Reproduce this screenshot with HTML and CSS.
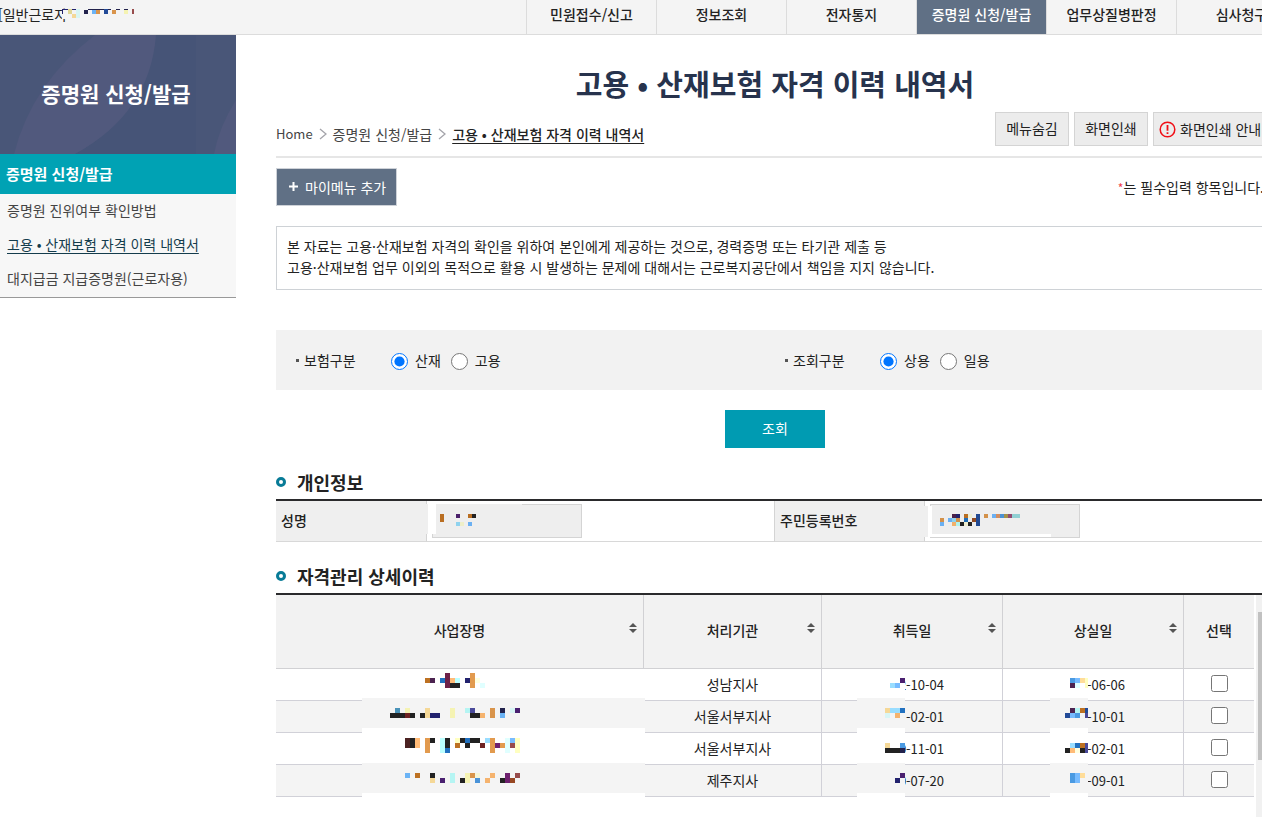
FILE: index.html
```html
<!DOCTYPE html>
<html lang="ko">
<head>
<meta charset="utf-8">
<title>고용 • 산재보험 자격 이력 내역서</title>
<link rel="stylesheet" href="styles.css">
</head>
<body>
<header class="topbar">
  <div class="user">[일반근로자
    <svg class="mask mask-user" width="74" height="10" viewBox="62 9 74 10" shape-rendering="crispEdges" aria-hidden="true">
      <path fill="#f4f4f4" d="M62 9h74v10h-74z"/>
      <path fill="#22226e" d="M62 9h6v1h-6zM62 9h1v5h-1zM72 9h4v1h-4z"/>
      <path fill="#e0d897" d="M68 9h4v5h-4z"/><path fill="#f5d897" d="M72 14h4v4h-4z"/><path fill="#d8f5f3" d="M76 9h4v9h-4z"/>
      <path fill="#22224c" d="M84 10h4v4h-4zM88 9h12v1h-12zM100 9h4v1h-4zM108 9h3v1h-3zM116 9h4v1h-4zM124 9h4v1h-4z"/>
      <path fill="#6bb3f5" d="M92 10h4v4h-4z"/><path fill="#d9944b" d="M96 10h4v4h-4zM112 10h4v4h-4z"/>
      <path fill="#224a97" d="M104 9h4v5h-4z"/><path fill="#f5f3b3" d="M124 10h4v4h-4z"/><path fill="#974c4c" d="M132 9h2v5h-2z"/>
    </svg>
  </div>
  <nav class="gnb" aria-label="주 메뉴">
    <a href="#">민원접수/신고</a>
    <a href="#">정보조회</a>
    <a href="#">전자통지</a>
    <a href="#" class="on">증명원 신청/발급</a>
    <a href="#">업무상질병판정</a>
    <a href="#">심사청구</a>
  </nav>
</header>

<div class="layout">
  <aside class="side">
    <div class="side-hero">
      <svg class="leaf" viewBox="0 0 236 119" preserveAspectRatio="none" aria-hidden="true">
        <path fill="#465477" d="M156 0h40v119H75Q148 78 156 0z"/>
        <path fill="#51597d" d="M95 0Q32 48 14 119h61Q150 78 156 0zM236 65Q219 92 214 119h22z"/>
      </svg>
      <h2>증명원 신청/발급</h2>
    </div>
    <h3 class="side-group">증명원 신청/발급</h3>
    <ul class="side-list">
      <li><a href="#">증명원 진위여부 확인방법</a></li>
      <li><a href="#" class="on">고용 • 산재보험 자격 이력 내역서</a></li>
      <li><a href="#">대지급금 지급증명원(근로자용)</a></li>
    </ul>
  </aside>

  <main class="main">
    <h1>고용 • 산재보험 자격 이력 내역서</h1>
    <div class="pagebar">
      <nav class="crumbs" aria-label="현재 위치">
        <a href="#" class="home">Home</a>
        <svg width="8" height="12" viewBox="0 0 8 12" aria-hidden="true"><path d="M1 1l6 5-6 5" fill="none" stroke="#a4a4aa" stroke-width="1.3"/></svg>
        <a href="#">증명원 신청/발급</a>
        <svg width="8" height="12" viewBox="0 0 8 12" aria-hidden="true"><path d="M1 1l6 5-6 5" fill="none" stroke="#a4a4aa" stroke-width="1.3"/></svg>
        <a href="#" class="here">고용 • 산재보험 자격 이력 내역서</a>
      </nav>
      <div class="tools">
        <button type="button">메뉴숨김</button>
        <button type="button">화면인쇄</button>
        <button type="button" class="with-icon">
          <svg width="17" height="17" viewBox="0 0 17 17" aria-hidden="true"><circle cx="8.5" cy="8.5" r="7.3" fill="none" stroke="#f00e16" stroke-width="1.5"/><path d="M8.5 4v5.800M8.500 11.200v1.800" stroke="#f00e16" stroke-width="1.800"/></svg>
          화면인쇄 안내</button>
      </div>
    </div>

    <div class="actions">
      <button type="button" class="add"><svg width="11" height="11" viewBox="0 0 11 11" aria-hidden="true"><path d="M5.500 1v9M1 5.500h9" stroke="#fff" stroke-width="2"/></svg>마이메뉴 추가</button>
      <p class="required"><span>*</span>는 필수입력 항목입니다.</p>
    </div>

    <p class="notice">본 자료는 고용·산재보험 자격의 확인을 위하여 본인에게 제공하는 것으로, 경력증명 또는 타기관 제출 등<br>고용·산재보험 업무 이외의 목적으로 활용 시 발생하는 문제에 대해서는 근로복지공단에서 책임을 지지 않습니다.</p>

    <form class="search">
      <div class="filters">
        <div class="filter" role="radiogroup" aria-labelledby="ins">
          <span class="filter-name" id="ins">보험구분</span>
          <label><input type="radio" name="ins" checked>산재</label>
          <label><input type="radio" name="ins">고용</label>
        </div>
        <div class="filter" role="radiogroup" aria-labelledby="kind">
          <span class="filter-name" id="kind">조회구분</span>
          <label><input type="radio" name="kind" checked>상용</label>
          <label><input type="radio" name="kind">일용</label>
        </div>
      </div>
      <button type="button" class="submit">조회</button>
    </form>

    <h2 class="section">개인정보</h2>
    <table class="info">
      <colgroup><col class="c-label"><col class="c-name"><col class="c-label"><col></colgroup>
      <tr>
        <th scope="row"><label for="nm">성명</label></th>
        <td><div class="field"><input id="nm" type="text" readonly>
          <svg class="mask mask-name" width="98" height="30" viewBox="424 504 98 30" shape-rendering="crispEdges" aria-hidden="true">
            <path fill="#efefef" d="M424 504h4v30h-4z"/><path fill="#fff" d="M428 504h8v30h-8z"/><path fill="#eee" d="M436 504h86v30h-86z"/>
            <path fill="#b96e22" d="M440 514h4v8h-4zM468 514h4v4h-4z"/><path fill="#4a206a" d="M456 514h4v4h-4z"/><path fill="#222" d="M472 514h4v4h-4z"/>
            <path fill="#8fd2ee" d="M456 522h4v4h-4z"/><path fill="#eeeec8" d="M460 522h4v4h-4z"/><path fill="#6bb0f2" d="M468 522h4v4h-4z"/>
          </svg></div></td>
        <th scope="row"><label for="rrn">주민등록번호</label></th>
        <td><div class="field"><input id="rrn" type="text" readonly>
          <svg class="mask mask-rrn" width="129" height="31" viewBox="922 506 129 31" shape-rendering="crispEdges" aria-hidden="true">
            <path fill="#efefef" d="M922 506h6v31h-6z"/><path fill="#fff" d="M928 506h4v31h-4zM932 534h119v3h-119z"/><path fill="#eee" d="M932 506h119v28h-119z"/>
            <path fill="#4a2048" d="M952 514h4v4h-4z"/><path fill="#22226a" d="M956 514h4v4h-4z"/><path fill="#b96e22" d="M964 514h4v4h-4z"/>
            <path fill="#eeeed0" d="M968 514h4v4h-4zM964 522h4v4h-4z"/><path fill="#224a92" d="M976 514h4v12h-4z"/>
            <path fill="#d3914a" d="M984 514h4v4h-4zM940 518h4v4h-4zM956 518h4v4h-4z"/>
            <path fill="#6bb0f2" d="M992 514h4v4h-4zM948 518h4v4h-4zM940 522h4v4h-4z"/><path fill="#d38e60" d="M996 514h4v4h-4z"/>
            <path fill="#4a91d3" d="M1000 514h4v4h-4z"/><path fill="#a3914a" d="M1004 514h4v4h-4z"/><path fill="#914a70" d="M1008 514h4v4h-4z"/>
            <path fill="#91d0d3" d="M1012 514h8v4h-8z"/><path fill="#8fd2ee" d="M952 518h4v4h-4z"/><path fill="#216eb9" d="M964 518h4v4h-4z"/>
            <path fill="#914a22" d="M972 518h4v4h-4z"/><path fill="#f2b06b" d="M952 522h4v4h-4z"/><path fill="#b0f2ee" d="M956 522h4v4h-4z"/><path fill="#222" d="M960 522h4v4h-4zM968 522h4v4h-4z"/>
          </svg></div></td>
      </tr>
    </table>

    <h2 class="section">자격관리 상세이력</h2>
    <div class="grid">
      <div class="grid-body">
      <table class="history">
        <colgroup><col><col class="c-office"><col class="c-date"><col class="c-date"><col class="c-check"></colgroup>
        <thead>
          <tr>
            <th scope="col">사업장명<svg class="sort" viewBox="0 0 8 10" aria-hidden="true"><path d="M4 0l4 4H0zM4 10l4-4H0z"/></svg></th>
            <th scope="col">처리기관<svg class="sort" viewBox="0 0 8 10" aria-hidden="true"><path d="M4 0l4 4H0zM4 10l4-4H0z"/></svg></th>
            <th scope="col">취득일<svg class="sort" viewBox="0 0 8 10" aria-hidden="true"><path d="M4 0l4 4H0zM4 10l4-4H0z"/></svg></th>
            <th scope="col">상실일<svg class="sort" viewBox="0 0 8 10" aria-hidden="true"><path d="M4 0l4 4H0zM4 10l4-4H0z"/></svg></th>
            <th scope="col">선택</th>
          </tr>
        </thead>
        <tbody>
          <tr><td></td><td>성남지사</td><td class="date">2-10-04</td><td class="date">-06-06</td><td><input type="checkbox" aria-label="성남지사 선택"></td></tr>
          <tr><td></td><td>서울서부지사</td><td class="date">-02-01</td><td class="date">-10-01</td><td><input type="checkbox" aria-label="서울서부지사 선택"></td></tr>
          <tr><td></td><td>서울서부지사</td><td class="date">0-11-01</td><td class="date">-02-01</td><td><input type="checkbox" aria-label="서울서부지사 선택"></td></tr>
          <tr><td></td><td>제주지사</td><td class="date">0-07-20</td><td class="date">-09-01</td><td><input type="checkbox" aria-label="제주지사 선택"></td></tr>
        </tbody>
      </table>

      <svg class="mask mask-place" width="285" height="125" viewBox="0 0 57 25" shape-rendering="crispEdges" aria-hidden="true">
        <path fill="#f4f4f4" d="M.4 5H57v6H.4zM.4 18H57v6H.4z"/><path fill="#fff" d="M.4 11H57v7H.4zM.4 24H57v1H.4z"/>
        <path fill="#bd7122" d="M13 1h1v1h-1zM19 14h1v1h-1zM11 20h1v1h-1z"/>
        <path fill="#4c2350" d="M14 1h1v1h-1z"/>
        <path fill="#2171c0" d="M16 1h1v1h-1zM17 15h1v1h-1zM21 13h1v1h-1z"/>
        <path fill="#6e2148" d="M17 0h1v3h-1z"/>
        <path fill="#ffbb77" d="M18 1h1v1h-1zM11 13h1v2h-1z"/>
        <path fill="#bbffff" d="M19 1h1v1h-1zM16 13h1v3h-1z"/>
        <path fill="#222" d="M18 2h2v1h-2zM6 8h3v1H6zM10 8h1v1h-1zM12 8h1v1h-1zM22 8h2v1h-2zM10 13h1v2h-1zM14 13h1v1h-1zM17 13h1v2h-1zM20 13h1v1h-1zM21 14h1v1h-1zM22 13h2v1h-2zM14 20h1v1h-1zM20 21h1v1h-1zM28 21h1v1h-1z"/>
        <path fill="#22226e" d="M21 1h1v1h-1zM14 8h2v1h-2z"/>
        <path fill="#e29a4e" d="M22 0h1v3h-1zM13 13h1v3h-1zM26 13h1v3h-1zM28 14h1v1h-1z"/>
        <path fill="#ffffe0" d="M23 1h1v1h-1z"/>
        <path fill="#e0ffff" d="M24 2h1v1h-1zM29 13h1v3h-1z"/>
        <path fill="#4a93b9" d="M7 7h1v1H7z"/>
        <path fill="#f5f3b3" d="M9 7h1v1H9zM18 7h1v2h-1zM21 20h1v2h-1z"/>
        <path fill="#6e2222" d="M9 8h1v1H9zM24 14h1v1h-1z"/>
        <path fill="#f5d897" d="M13 7h1v2h-1zM14 21h1v1h-1z"/>
        <path fill="#b5f5f3" d="M21 7h1v1h-1zM18 20h1v2h-1z"/>
        <path fill="#4a4a9a" d="M22 7h1v1h-1z"/>
        <path fill="#f5b36e" d="M24 8h1v1h-1zM25 21h1v1h-1zM26 20h1v1h-1z"/>
        <path fill="#d9944b" d="M26 7h1v2h-1zM22 20h1v1h-1z"/>
        <path fill="#22224c" d="M28 7h1v1h-1z"/>
        <path fill="#6bb3f5" d="M28 8h1v1h-1zM9 20h1v1H9z"/>
        <path fill="#d8f5f5" d="M30 7h1v1h-1z"/>
        <path fill="#4a2070" d="M31 7h1v1h-1zM16 21h1v1h-1z"/>
        <path fill="#4c2222" d="M9 13h1v2H9z"/>
        <path fill="#ffffc0" d="M19 13h1v1h-1zM31 13h1v3h-1z"/>
        <path fill="#99ddff" d="M25 13h1v1h-1z"/>
        <path fill="#6e216e" d="M27 14h1v1h-1zM29 20h1v2h-1z"/>
        <path fill="#77bbff" d="M30 13h1v1h-1z"/>
        <path fill="#974c4c" d="M30 14h1v1h-1zM31 20h1v1h-1z"/>
        <path fill="#f5f5d8" d="M23 20h1v1h-1z"/>
        <path fill="#4a93d9" d="M23 21h1v1h-1z"/>
        <path fill="#974722" d="M30 21h1v1h-1z"/>
      </svg>

      <svg class="mask mask-from" width="50" height="125" viewBox="0 0 10 25" shape-rendering="crispEdges" aria-hidden="true">
        <path fill="#fff" d="M.4 0H10v5H.4zM.4 11H10v7H.4zM.4 24H10v1H.4z"/><path fill="#f4f4f4" d="M.4 5H10v6H.4zM.4 18H10v6H.4z"/>
        <path fill="#99ddff" d="M7 2h1v1H7zM7 7h2v1H7z"/><path fill="#77bbff" d="M8 2h1v1H8z"/><path fill="#4a2070" d="M9 1h1v1H9zM9 20h1v1H9z"/>
        <path fill="#f5d897" d="M6 7h1v1H6zM6 14h1v1H6z"/><path fill="#2171c0" d="M9 7h1v1H9z"/><path fill="#d8f5f5" d="M6 8h1v1H6z"/><path fill="#f5b36e" d="M8 8h1v1H8z"/>
        <path fill="#4a9ae2" d="M9 14h1v1H9z"/><path fill="#222" d="M6 15h3v1H6z"/><path fill="#22224c" d="M9 15h1v1H9z"/><path fill="#22226e" d="M8 21h1v1H8z"/>
      </svg>

      <svg class="mask mask-to" width="38" height="125" viewBox="0 0 7.6 25" shape-rendering="crispEdges" aria-hidden="true">
        <path fill="#fff" d="M0 0h7.600v5H0zM0 11h7.600v7H0zM0 24h7.600v1H0z"/><path fill="#f4f4f4" d="M0 5h7.600v6H0zM0 18h7.600v6H0z"/>
        <path fill="#4a9ae2" d="M4 1h1v1H4zM5 8h1v1H5zM4 20h1v2H4z"/><path fill="#77bbff" d="M5 1h1v1H5zM4 8h1v1H4zM5 20h1v2H5z"/>
        <path fill="#ffdd99" d="M6 1h1v1H6zM6 20h1v1H6z"/><path fill="#ffffc0" d="M7 1h1v2H7z"/><path fill="#4c2350" d="M4 2h1v1H4zM4 7h1v1H4z"/>
        <path fill="#e0ffff" d="M5 2h1v1H5z"/><path fill="#b5f5f3" d="M5 7h1v1H5z"/><path fill="#bd7122" d="M6 7h1v1H6zM6 14h1v1H6z"/>
        <path fill="#224a97" d="M7 7h1v1H7zM3 8h1v1H3z"/><path fill="#4a4a9a" d="M7 8h1v1H7zM7 14h1v2H7z"/><path fill="#99ddff" d="M4 14h1v1H4z"/>
        <path fill="#2171c0" d="M5 14h1v1H5z"/><path fill="#222" d="M3 15h1v1H3zM6 15h1v1H6z"/><path fill="#ffbb77" d="M4 15h1v1H4z"/><path fill="#ffffe0" d="M5 15h1v1H5z"/>
      </svg>
      </div>
      <div class="scroll" aria-hidden="true">
        <svg class="arrow" viewBox="0 0 17 17"><path fill="#505050" d="M5 11h7l-3.500-4z"/></svg>
        <div class="thumb"></div>
        <svg class="arrow" viewBox="0 0 17 17"><path fill="#505050" d="M5 6h7l-3.500 4z"/></svg>
      </div>
    </div>
  </main>
</div>
</body>
</html>
```

FILE: styles.css
```css
*, *::before { box-sizing: border-box; }
body {
  margin: 0;
  overflow: hidden;
  background: #fff;
  color: #222;
  font: 14px/20px "Noto Sans CJK KR", sans-serif;
}
h1, h2, h3, p, ul { margin: 0; padding: 0; }
ul { list-style: none; }
a { color: inherit; text-decoration: none; }
button { font: inherit; color: inherit; padding: 0 0 2px; cursor: pointer; }
.mask { position: absolute; pointer-events: none; }

.topbar {
  display: flex;
  justify-content: space-between;
  height: 35px;
  background: #f4f4f4;
  border-bottom: 1px solid #dcdcdc;
}
.user { position: relative; margin-left: -2px; padding-top: 4px; }
.mask-user { left: 64px; top: 9px; }
.gnb { display: flex; flex: none; margin-right: -44px; }
.gnb a {
  width: 130px;
  padding-top: 4px;
  border-left: 1px solid #dcdcdc;
  text-align: center;
  font-weight: 500;
}
.gnb .on { background: #607085; color: #fff; }

.layout { display: flex; align-items: flex-start; }
.side { flex: none; width: 236px; border-bottom: 1px solid #999; background: #f7f7f7; }
.side-hero {
  position: relative;
  display: flex;
  align-items: center;
  justify-content: center;
  height: 119px;
  padding: 0 4px 4px 0;
  background: #495678;
}
.leaf { position: absolute; left: 0; top: 0; width: 100%; height: 100%; }
.side-hero h2 { position: relative; color: #fff; font-size: 21px; line-height: 28px; font-weight: 700; }
.side-group {
  padding: 10px 6px;
  background: #00a2b4;
  color: #fff;
  font-size: 15px;
  line-height: 20px;
  font-weight: 700;
}
.side-list { padding-bottom: 1px; }
.side-list li { padding: 6px 7px 8px; color: #444; }
.side-list .on { color: #143c4c; text-decoration: underline; text-underline-offset: 3px; }

.main { flex: 1; min-width: 0; margin: 0 -12px 0 40px; }
h1 {
  padding: 26px 0 2px;
  color: #27334d;
  font-size: 29px;
  line-height: 44px;
  font-weight: 700;
  text-align: center;
}
.pagebar {
  display: flex;
  justify-content: space-between;
  padding: 5px 0 10px;
  border-bottom: 2px solid #e6e6e6;
}
.crumbs { display: flex; align-items: center; gap: 6px; padding-top: 10px; color: #444; }
.crumbs .home { font-size: 13px; }
.crumbs .here { color: #222; font-weight: 500; text-decoration: underline; text-underline-offset: 3px; }
.tools { display: flex; gap: 5px; }
.tools button {
  height: 34px;
  width: 74px;
  border: 1px solid #d4d4d4;
  background: #ececec;
}
.tools .with-icon { display: flex; align-items: center; gap: 4px; width: 121px; padding: 0 0 0 5px; }

.actions { display: flex; justify-content: space-between; align-items: center; padding: 10px 0 20px; }
.add {
  display: flex;
  align-items: center;
  gap: 6px;
  height: 38px;
  padding: 0 10px 1px 11px;
  border: 1px solid #ced2d8;
  background: #607085;
  color: #fff;
}
.required { padding-right: 10px; }
.required span { color: #f0404a; font-size: 12px; }
.notice { padding: 9px 10px 11px; border: 1px solid #ced2d6; line-height: 21px; }

.search { padding: 40px 0 20px; text-align: center; }
.filters {
  display: grid;
  grid-template-columns: 489px 1fr;
  height: 60px;
  padding-left: 20px;
  background: #f2f2f2;
  text-align: left;
}
.filter { display: flex; align-items: center; gap: 10px; }
.filter-name { display: flex; align-items: center; gap: 5px; width: 85px; }
.filter-name::before { content: ""; width: 3px; height: 3px; background: #555; }
.filter label { display: flex; align-items: center; gap: 7px; }
.filter input { width: 17px; height: 17px; margin: 2px 0 0; accent-color: #0075ff; }
.submit { width: 100px; height: 38px; margin-top: 20px; border: 0; background: #009bb2; color: #fff; }

.section {
  display: flex;
  align-items: center;
  gap: 11px;
  padding-bottom: 3px;
  font-size: 18px;
  line-height: 28px;
  font-weight: 700;
}
.section::before { content: ""; width: 10px; height: 10px; border: 3px solid #087b97; border-radius: 50%; }

.info { width: 100%; border-collapse: separate; border-spacing: 0; border-top: 2px solid #2a2a2c; table-layout: fixed; margin-bottom: 20px; }
.c-label { width: 151px; }
.c-name { width: 347px; }
.info th {
  height: 41px;
  padding: 0 5px 3px;
  background: #efefef;
  border-right: 1px solid #d4d4d4;
  border-bottom: 1px solid #d8d8d8;
  text-align: left;
  font-weight: 500;
}
.info th + td + th { border-left: 1px solid #d4d4d4; }
.info td { padding: 0 5px; border-bottom: 1px solid #d8d8d8; }
.field { position: relative; width: 150px; height: 34px; }
.field input { display: block; width: 150px; height: 34px; border: 1px solid #d4d4d4; background: #eee; }
.mask-name { left: -8px; top: 0; }
.mask-rrn { left: -8px; top: 2px; }

.grid { display: flex; gap: 2px; border-top: 2px solid #2a2a2c; }
.grid-body { position: relative; flex: 1; }
.history { width: 100%; border-collapse: separate; border-spacing: 0; table-layout: fixed; text-align: center; }
.c-office { width: 178px; }
.c-date { width: 181px; }
.c-check { width: 70px; }
.history th {
  position: relative;
  height: 74px;
  padding: 0 0 3px;
  background: #f2f2f2;
  border-right: 1px solid #d1d1d4;
  border-bottom: 1px solid #d1d1d4;
  font-weight: 500;
}
.history td { height: 32px; padding: 0 0 2px; border-right: 1px solid #d1d1d8; border-bottom: 1px solid #d1d1d8; }
.history th:last-child, .history td:last-child { border-right: 0; }
.history td:first-child { border-right: 0; }
.history tbody tr:nth-child(even) { background: #f4f4f4; }
.history .date { padding: 0 58px 0 0; text-align: right; font-size: 13px; }
.history input { display: block; width: 17px; height: 17px; margin: 0 auto; }
.sort { position: absolute; right: 6px; top: 28px; width: 8px; height: 10px; fill: #555; }
.mask-place { left: 84px; top: 78px; }
.mask-from { left: 579px; top: 78px; }
.mask-to { left: 774px; top: 78px; }

.scroll { flex: none; width: 18px; height: 222px; padding-left: 1px; background: #f1f1f1; }
.arrow { display: block; width: 17px; height: 17px; }
.thumb { height: 148px; margin: 0 1px 40px; background: #c1c1c1; }
```
